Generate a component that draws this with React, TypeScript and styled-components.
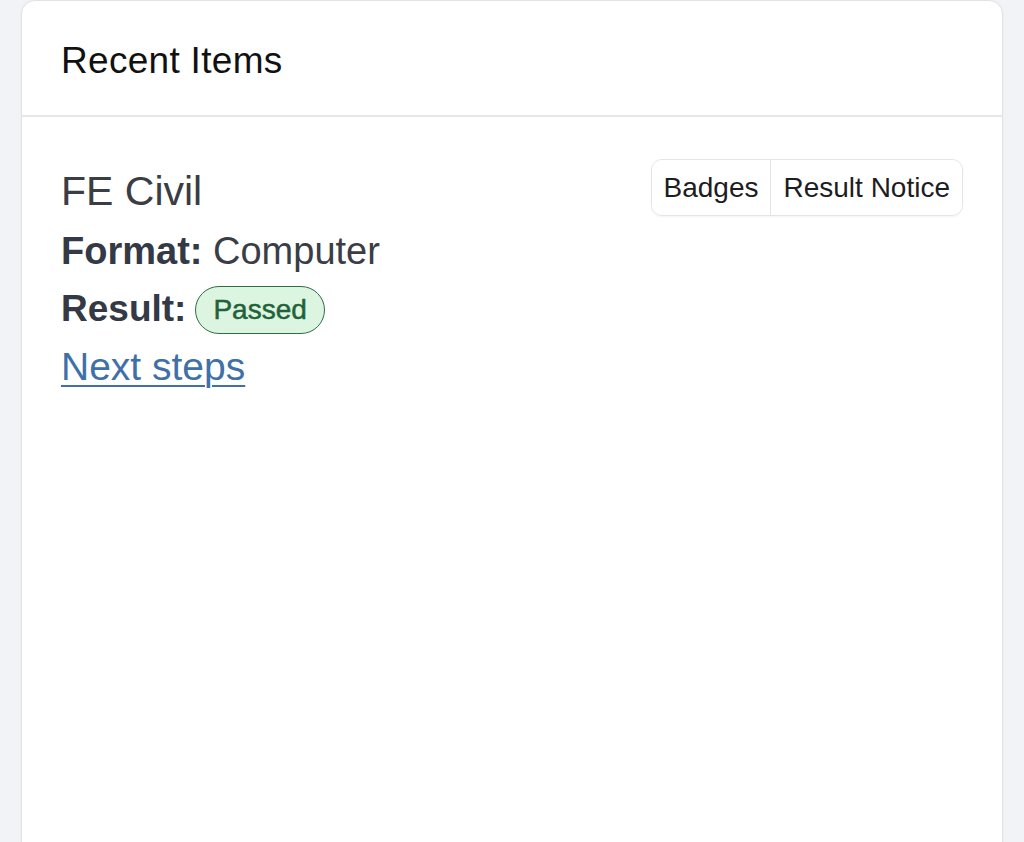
import React from "react";
import styled, { createGlobalStyle } from "styled-components";

const GlobalStyle = createGlobalStyle`
  html, body {
    margin: 0;
    padding: 0;
    background: #f2f3f7;
    font-family: "Liberation Sans", Arial, Helvetica, sans-serif;
  }
  #root {
    min-height: 842px;
  }
`;

const Page = styled.div`
  padding: 0 21px;
  height: 842px;
  overflow: hidden;
`;

const Card = styled.section`
  background: #ffffff;
  border: 1px solid #e2e3e7;
  border-radius: 14px;
  min-height: 900px;
  box-shadow: 0 0 3px rgba(0, 0, 0, 0.04);
`;

const CardHeader = styled.header`
  height: 108px;
  padding: 6px 39px 0;
  display: flex;
  align-items: center;
  border-bottom: 2px solid #e6e7ea;
`;

const Title = styled.h2`
  margin: 0;
  font-size: 37px;
  font-weight: 400;
  color: #111111;
  letter-spacing: 0.3px;
`;

const CardBody = styled.div`
  padding: 43px 39px 40px;
  display: flex;
  justify-content: space-between;
  align-items: flex-start;
`;

const Details = styled.div`
  display: flex;
  flex-direction: column;
`;

const ExamName = styled.div`
  font-size: 41px;
  line-height: 62px;
  color: #3a3d44;
`;

const Line = styled.div<{ $tight?: boolean }>`
  font-size: ${(p) => (p.$tight ? "37px" : "38px")};
  line-height: 58px;
  color: #3a3d45;
  display: flex;
  align-items: center;
  gap: 9px;
`;

const Label = styled.strong`
  font-weight: 700;
  color: #333945;
`;

const StatusPill = styled.span<{ $tone: "success" | "neutral" }>`
  display: inline-flex;
  align-items: center;
  height: 46px;
  padding: 0 17px;
  margin-top: 2px;
  border-radius: 24px;
  font-size: 28px;
  font-weight: 400;
  -webkit-text-stroke: 0.5px currentColor;
  color: ${(p) => (p.$tone === "success" ? "#23613a" : "#444")};
  background: ${(p) => (p.$tone === "success" ? "#dcf5e0" : "#eee")};
  border: 1.5px solid ${(p) => (p.$tone === "success" ? "#2f6e45" : "#999")};
`;

const NextLink = styled.a`
  font-size: 39px;
  line-height: 58px;
  color: #4070a8;
  text-decoration: underline;
  text-decoration-thickness: 2px;
  text-underline-offset: 5px;
`;

const ButtonGroup = styled.div`
  display: flex;
  margin-top: -1px;
  border: 1.5px solid #e3e4e7;
  border-radius: 11px;
  overflow: hidden;
  box-shadow: 0 1px 2px rgba(0, 0, 0, 0.05);
`;

const GroupButton = styled.button`
  height: 55px;
  padding: 0 12px;
  background: #ffffff;
  border: none;
  font-family: inherit;
  font-size: 28px;
  color: #1d1d1f;
  cursor: pointer;
  & + & {
    border-left: 1.5px solid #e3e4e7;
  }
`;

export default function App() {
  return (
    <>
      <GlobalStyle />
      <Page>
        <Card>
          <CardHeader>
            <Title>Recent Items</Title>
          </CardHeader>
          <CardBody>
            <Details>
              <ExamName>FE Civil</ExamName>
              <Line>
                <span>
                  <Label>Format:</Label> Computer
                </span>
              </Line>
              <Line $tight>
                <Label>Result:</Label>
                <StatusPill $tone="success">Passed</StatusPill>
              </Line>
              <NextLink href="#">Next steps</NextLink>
            </Details>
            <ButtonGroup>
              <GroupButton>Badges</GroupButton>
              <GroupButton>Result Notice</GroupButton>
            </ButtonGroup>
          </CardBody>
        </Card>
      </Page>
    </>
  );
}
